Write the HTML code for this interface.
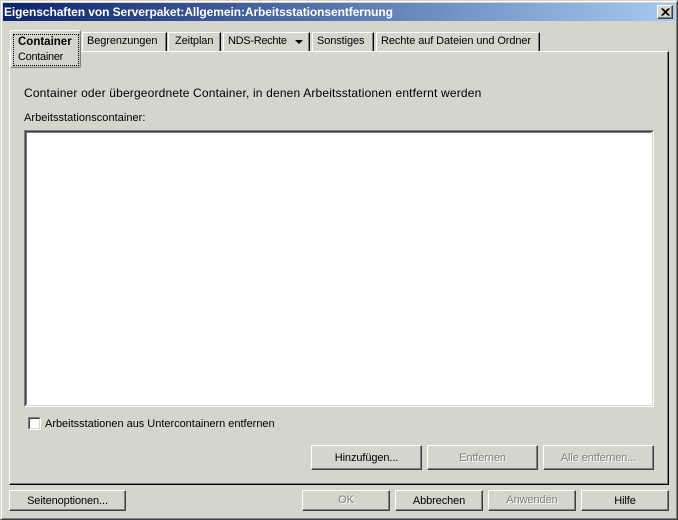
<!DOCTYPE html>
<html><head><meta charset="utf-8">
<style>
html,body{margin:0;padding:0}
body{width:678px;height:520px;position:relative;overflow:hidden;background:#d5d4cd;font-family:"Liberation Sans",Arial,sans-serif;font-size:11px;color:#000}
.a{position:absolute;box-sizing:border-box}
.t{position:absolute;white-space:nowrap;line-height:13px}
.btn{position:absolute;box-sizing:border-box;background:#d5d4cd;border-top:1px solid #fff;border-left:1px solid #fff;border-right:1px solid #404040;border-bottom:1px solid #404040;box-shadow:inset -1px -1px 0 #808080;text-align:center;white-space:nowrap;letter-spacing:-.1px}
.dis{color:#808080;text-shadow:1px 1px 0 #fff}
.tab{position:absolute;box-sizing:border-box;top:32px;height:19px;background:#d5d4cd;border-top:1px solid #fff;border-left:1px solid #fff;border-right:1px solid #000;box-shadow:inset -1px 0 0 #808080;white-space:nowrap;line-height:17px;padding-left:4px;letter-spacing:-.1px}
</style></head><body>
<div class="a" style="left:0;top:0;width:678px;height:520px;border:1px solid #d5d4cd;border-right-color:#404040;border-bottom-color:#404040;box-shadow:inset 1px 1px 0 #fff,inset -1px -1px 0 #808080"></div>
<div class="a" style="left:3px;top:3px;width:672px;height:18px;background:linear-gradient(90deg,#0a246a,#a6caf0)"></div>
<div class="t" style="left:4px;top:5px;color:#fff;font-weight:bold;font-size:12px;line-height:15px;letter-spacing:-.08px">Eigenschaften von Serverpaket:Allgemein:Arbeitsstationsentfernung</div>
<div class="a" style="left:657px;top:5px;width:16px;height:14px;background:#d5d4cd;border:1px solid;border-color:#fff #404040 #404040 #fff;box-shadow:inset -1px -1px 0 #808080">
<svg width="14" height="12" style="position:absolute;left:0;top:0"><path d="M3.5 2.5L10.5 9.5M4.5 2.5L11.5 9.5M10.5 2.5L3.5 9.5M11.5 2.5L4.5 9.5" stroke="#000" stroke-width="1" fill="none"/></svg></div>

<!-- panel -->
<div class="a" style="left:9px;top:51px;width:660px;height:434px;border-top:1px solid #fff;border-left:1px solid #fff;border-right:1px solid #000;border-bottom:1px solid #000;box-shadow:inset -1px -1px 0 #808080"></div>

<!-- tabs -->
<div class="tab" style="left:82px;width:85px">Begrenzungen</div>
<div class="tab" style="left:168px;width:53px;padding-left:6px">Zeitplan</div>
<div class="tab" style="left:223px;width:87px;letter-spacing:-.3px">NDS-Rechte
<svg width="9" height="5" style="position:absolute;left:71px;top:7px"><path d="M0 0H8L4 4Z" fill="#000"/></svg></div>
<div class="tab" style="left:312px;width:62px">Sonstiges</div>
<div class="tab" style="left:376px;width:164px">Rechte auf Dateien und Ordner</div>

<!-- active tab -->
<div class="a" style="left:10px;top:30px;width:71px;height:38px;background:#d5d4cd;border-top:1px solid #fff;border-left:1px solid #fff;border-right:1px solid #808080;border-bottom:1px solid #808080;border-radius:2px;box-shadow:inset -1px -1px 0 #c0bfb8"></div>
<div class="a" style="left:13px;top:34px;width:66px;height:32px;border:1px dotted #000"></div>
<div class="t" style="left:18px;top:36px;font-weight:bold;font-size:11.5px">Container</div>
<div class="t" style="left:18px;top:51px;letter-spacing:-.3px">Container</div>

<div class="t" style="left:24px;top:86px;font-size:12px;line-height:14px;letter-spacing:.17px">Container oder übergeordnete Container, in denen Arbeitsstationen entfernt werden</div>
<div class="t" style="left:24px;top:112px;letter-spacing:.04px">Arbeitsstationscontainer:</div>

<!-- list -->
<div class="a" style="left:24px;top:130px;width:630px;height:277px;background:#fff;border:1px solid;border-color:#808080 #fff #fff #808080"></div>
<div class="a" style="left:25px;top:131px;width:628px;height:275px;border:1px solid;border-color:#404040 #d5d4cd #d5d4cd #404040"></div>
<div class="a" style="left:26px;top:132px;width:626px;height:273px;border:1px solid;border-color:#808080 #fff #fff #808080"></div>

<!-- checkbox -->
<div class="a" style="left:28px;top:417px;width:13px;height:13px;background:#fff;border:1px solid;border-color:#808080 #fff #fff #808080"></div>
<div class="a" style="left:29px;top:418px;width:11px;height:11px;border:1px solid;border-color:#404040 #d5d4cd #d5d4cd #404040"></div>
<div class="t" style="left:45px;top:418px;letter-spacing:-.02px">Arbeitsstationen aus Untercontainern entfernen</div>

<!-- buttons -->
<div class="btn" style="left:311px;top:445px;width:111px;height:25px;line-height:24px">Hinzufügen...</div>
<div class="btn dis" style="left:427px;top:445px;width:111px;height:25px;line-height:24px">Entfernen</div>
<div class="btn dis" style="left:543px;top:445px;width:111px;height:25px;line-height:24px">Alle entfernen...</div>

<div class="btn" style="left:9px;top:490px;width:117px;height:21px;line-height:20px">Seitenoptionen...</div>
<div class="btn dis" style="left:302px;top:490px;width:88px;height:21px;line-height:19px">OK</div>
<div class="btn" style="left:395px;top:490px;width:88px;height:21px;line-height:20px">Abbrechen</div>
<div class="btn dis" style="left:488px;top:490px;width:88px;height:21px;line-height:19px">Anwenden</div>
<div class="btn" style="left:581px;top:490px;width:88px;height:21px;line-height:20px">Hilfe</div>
</body></html>
